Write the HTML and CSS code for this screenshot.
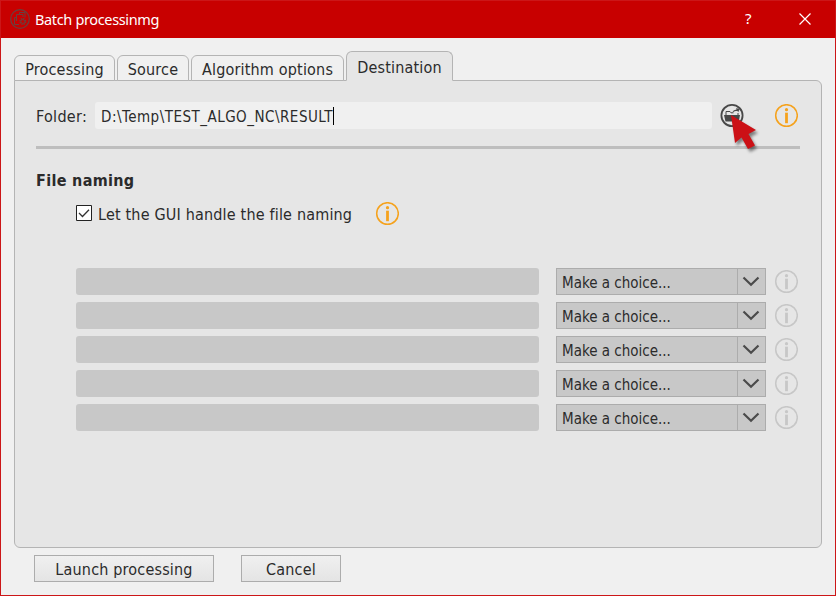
FILE: index.html
```
<!DOCTYPE html>
<html lang="en">
<head>
<meta charset="utf-8">
<title>Batch processinmg</title>
<link rel="stylesheet" href="styles.css">
</head>
<body>
<svg class="defs" aria-hidden="true">
  <symbol id="info" viewBox="0 0 24 24">
    <circle cx="12.500" cy="11.500" r="10.800" fill="none" stroke="currentColor" stroke-width="1.500"/>
    <circle cx="12.500" cy="5.700" r="1.600" fill="currentColor"/>
    <path d="M11.100 8.700h2.800v10.500h-2.800z" fill="currentColor"/>
  </symbol>
  <symbol id="chevron" viewBox="0 0 18 12">
    <path d="M1.500 1.500L9 8.700l7.500-7.200" fill="none" stroke="currentColor" stroke-width="2.200"/>
  </symbol>
</svg>
<div class="window">
  <header class="titlebar">
    <svg class="app-icon" viewBox="0 0 20 20" fill="none" stroke="currentColor">
      <circle cx="10" cy="10" r="9.300" stroke-width="1.200"/>
      <path d="M9 15.500H4.500V8.500H7M6.500 12V5.500H13V8M9.500 5.500V3.500h5.500v5" stroke-width="1"/>
      <circle cx="12.800" cy="12.500" r="2.800" stroke-width="1.500" stroke-dasharray="1.300 .9"/>
      <circle cx="12.800" cy="12.500" r="1.900" stroke-width=".9"/>
    </svg>
    <span class="title">Batch processinmg</span>
    <span class="help">?</span>
    <svg class="close" viewBox="0 0 12 12"><path d="M.5.5l11 11M11.500.5l-11 11" stroke="#fff" stroke-width="1.200"/></svg>
  </header>
  <nav class="tabs">
    <div class="tab t-processing"><span>Processing</span></div>
    <div class="tab t-source"><span>Source</span></div>
    <div class="tab t-options"><span>Algorithm options</span></div>
    <div class="tab active"><span>Destination</span></div>
  </nav>
  <main class="panel">
    <div class="folder-row">
      <span class="folder-label">Folder:</span>
      <div class="path"><span class="path-text">D:\Temp\TEST_ALGO_NC\RESULT</span><i class="caret"></i></div>
      <div class="browse">
        <svg class="browse-icon" viewBox="0 0 24 24">
          <circle cx="12" cy="11.500" r="10.600" fill="none" stroke="#484848" stroke-width="1.800"/>
          <path d="M4 11h16l-1.200 6.500H5.500z" fill="#484848"/>
          <path d="M6 11V7.500h4l1 1.300h2.500M18 11V9" fill="none" stroke="#484848" stroke-width="1"/>
          <path d="M12.500 8.500c.5-2.200 2-3 4-2.800L16 4.200l3.800.6-1.600 3.400-.7-1.300c-1.800-.1-3.200.3-5 1.600z" fill="#484848"/>
        </svg>
        <svg class="pointer" viewBox="0 0 34 44"><path d="M1 1l25 15-7.500 4 6.500 11.500-7 3.500-6.500-11.500L5 29z" fill="#cc1016"/></svg>
      </div>
      <svg class="info"><use href="#info"/></svg>
    </div>
    <div class="rule"></div>
    <h2>File naming</h2>
    <div class="check-row">
      <svg class="checkbox" viewBox="0 0 16 16"><path d="M.5.5h15v15H.5z" fill="#fff" stroke="#222"/><path d="M3 8l3.500 3.500L13 4.800" fill="none" stroke="#333" stroke-width="1.300"/></svg>
      <span class="check-label">Let the GUI handle the file naming</span>
      <svg class="info"><use href="#info"/></svg>
    </div>
    <div class="rows">
      <div class="row"><div class="field"></div><div class="select"><span>Make a choice...</span><b><svg><use href="#chevron"/></svg></b></div><svg class="info off"><use href="#info"/></svg></div>
      <div class="row"><div class="field"></div><div class="select"><span>Make a choice...</span><b><svg><use href="#chevron"/></svg></b></div><svg class="info off"><use href="#info"/></svg></div>
      <div class="row"><div class="field"></div><div class="select"><span>Make a choice...</span><b><svg><use href="#chevron"/></svg></b></div><svg class="info off"><use href="#info"/></svg></div>
      <div class="row"><div class="field"></div><div class="select"><span>Make a choice...</span><b><svg><use href="#chevron"/></svg></b></div><svg class="info off"><use href="#info"/></svg></div>
      <div class="row"><div class="field"></div><div class="select"><span>Make a choice...</span><b><svg><use href="#chevron"/></svg></b></div><svg class="info off"><use href="#info"/></svg></div>
    </div>
  </main>
  <footer class="actions">
    <div class="button launch">Launch processing</div>
    <div class="button cancel">Cancel</div>
  </footer>
</div>
</body>
</html>
```
FILE: styles.css
```
* { box-sizing: border-box; }
body { margin: 0; font: 16px/20px "DejaVu Sans Condensed", "DejaVu Sans", sans-serif; font-stretch: condensed; letter-spacing: .18px; color: #2b2b2b; }
svg { display: block; flex: none; }
.defs { position: absolute; width: 0; height: 0; }
.window { width: 836px; height: 596px; background: #f0f0f0; border: 1px solid #cc1618; white-space: nowrap; overflow: hidden; }
.titlebar { display: flex; align-items: center; height: 37px; background: #c80000; color: #fff; padding-left: 9px; }
.app-icon { width: 20px; height: 20px; margin-top: -1px; color: #68413f; }
.title { margin: -2px 0 0 5px; width: 709px; font: 14.5px/20px "Noto Sans", sans-serif; letter-spacing: -.35px; }
.help { width: 10px; padding-left: 1px; font: 15px/20px "Noto Sans", sans-serif; margin-top: -3px; }
.close { width: 12px; height: 12px; margin: -1px 0 0 45px; }
.tabs { position: relative; z-index: 1; display: flex; align-items: flex-end; gap: 2px; height: 43px; padding-left: 13px; margin-bottom: -1px; }
.tab { height: 26px; border: 1px solid #b4b4b4; border-radius: 6px 6px 0 0; background: #f0f0f0; width: 101px; text-align: center; line-height: 27px; }
.t-source { width: 72px; }
.t-options { width: 153px; }
.tab.active { width: 107px; height: 30px; background: #e6e6e6; border-bottom-color: #e6e6e6; line-height: 31px; }
.panel { width: 808px; height: 468px; margin-left: 13px; border: 1px solid #b4b4b4; border-radius: 0 6px 6px 6px; background: #e6e6e6; padding: 21px 21px 0; }
.folder-row { display: flex; align-items: center; height: 27px; }
.folder-label { width: 59px; padding-top: 2px; letter-spacing: .3px; }
.path { display: flex; align-items: center; width: 617px; height: 27px; padding-left: 6px; background: #f0f0f0; border-radius: 3px; font-size: 15px; }
.path-text { padding-top: 2px; letter-spacing: .49px; }
.caret { width: 1px; height: 18px; background: #000; }
.browse { position: relative; width: 24px; height: 24px; margin: 0 30px 0 8px; }
.browse-icon { width: 24px; height: 24px; }
.pointer { position: absolute; left: 10px; top: 10px; width: 34px; height: 44px; filter: drop-shadow(2px 3px 1.5px rgba(0,0,0,.45)); z-index: 2; }
.info { width: 24px; height: 24px; color: #f5a21d; }
.rule { width: 764px; height: 3px; margin-top: 17px; background: #bebebe; }
h2 { margin: 22px 0 0; font: bold 16px/20px "DejaVu Sans Condensed", "DejaVu Sans", sans-serif; font-stretch: condensed; letter-spacing: .32px; }
.check-row { display: flex; align-items: center; height: 24px; margin: 11px 0 0 40px; }
.checkbox { width: 16px; height: 16px; margin: -2px 6px 0 0; }
.check-label { width: 277px; padding-top: 2px; }
.rows { display: grid; gap: 7px; margin: 42px 0 0 40px; }
.row { display: flex; align-items: center; height: 27px; }
.field { width: 463px; height: 27px; border-radius: 3px; background: #c8c8c8; }
.select { display: flex; width: 210px; height: 27px; margin: 0 8px 0 17px; background: #c8c8c8; border: 1px solid #acacac; font-size: 15px; line-height: 28px; letter-spacing: 0; }
.select span { flex: 1; padding-left: 5px; }
.select b { width: 28px; border-left: 1px solid #acacac; padding: 7px 0 0 4px; color: #4b4b4b; }
.select b svg { width: 18px; height: 12px; }
.info.off { color: #c7c7c7; }
.actions { display: flex; gap: 27px; padding: 7px 0 0 33px; }
.button { width: 180px; height: 27px; border: 1px solid #acacac; background: linear-gradient(#f0f0f0, #e4e4e4); text-align: center; line-height: 27px; }
.cancel { width: 100px; }
```
